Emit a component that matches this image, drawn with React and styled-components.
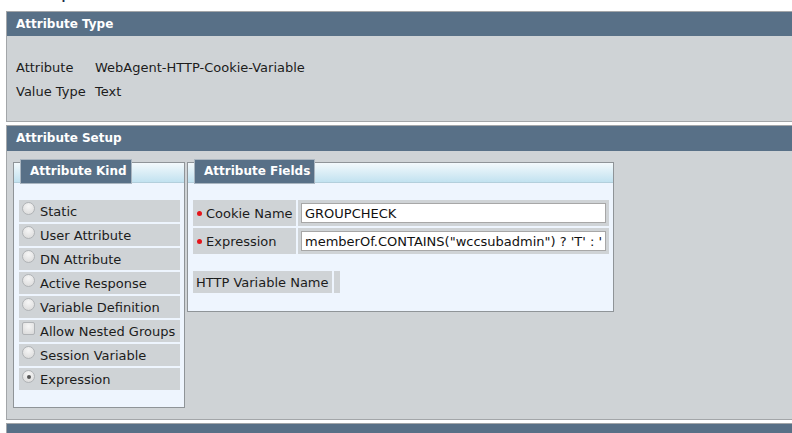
import React from 'react'
import styled, { createGlobalStyle } from 'styled-components'

const GlobalStyle = createGlobalStyle`
	html, body {
		margin     : 0;
		padding    : 0;
		background : #fff;
		overflow   : hidden;
	}
	body {
		font-family: "DejaVu Sans", Verdana, sans-serif;
		font-size  : 13px;
		color      : #1c1c1c;
	}
`

const Page = styled.div`
	width       : 830px;
	padding-left: 6px;
`

// only the descenders of the page title peek in above the first panel
const Title = styled.div`
	height        : 11px;
	overflow      : hidden;
	display       : flex;
	align-items   : flex-end;
	padding-left  : 19px;
	font-size     : 20px;
	line-height   : 1;
	color         : #1a2b4a;
`

const TitleText = styled.span`
	margin-bottom: 10px;
`

const Section = styled.div`
	border       : 1px solid #a3a6a9;
	margin-bottom: 3px;
`

const SectionHeader = styled.div`
	height      : ${p => p.$h || 24}px;
	line-height : ${p => p.$h || 24}px;
	background  : #587087;
	color       : #fff;
	font-weight : bold;
	font-size   : 12px;
	padding-left: 9px;
`

const SectionBody = styled.div`
	background: #cfd3d6;
	height    : ${p => p.$h}px;
	padding   : ${p => p.$pad};
	box-sizing: border-box;
`

const InfoTable = styled.div`
	display              : grid;
	grid-template-columns: 79px auto;
	grid-auto-rows       : 24px;
	align-items          : center;
`

const Setup = styled.div`
	display    : flex;
	align-items: flex-start;
	gap        : 2px;
`

const Fieldset = styled.div`
	width     : ${p => p.$w}px;
	box-sizing: border-box;
	border    : 1px solid #8f9498;
	background: #eef5fe;
`

const FieldHead = styled.div`
	height       : 20px;
	background   : linear-gradient(#f3f9fc, #c2e2f0);
	border-bottom: 1px solid #b3cfdc;
	box-sizing   : border-box;
`

const Legend = styled.div`
	display    : inline-block;
	margin     : -5px 0 0 6px;
	height     : 23px;
	line-height: 23px;
	padding    : 0 4px 0 9px;
	background : #587087;
	border     : 1px solid #a9b5c0;
	color      : #fff;
	font-weight: bold;
	font-size  : 12px;
	position   : relative;
`

const KindList = styled.div`
	display       : flex;
	flex-direction: column;
	gap           : 2px;
	padding       : 17px 4px 17px 5px;
`

const KindRow = styled.label`
	height      : 22px;
	display     : flex;
	align-items : center;
	gap         : 5px;
	padding-left: 3px;
	background  : #cfd3d6;
`

const Radio = styled.span`
	align-self     : flex-start;
	margin-top     : 2px;
	width          : 11px;
	height         : 11px;
	border         : 1px solid #b0b3b6;
	border-radius  : ${p => (p.$box ? '2px' : '50%')};
	background     : radial-gradient(circle at 50% 30%, #f6f6f6, #d8d8d8);
	display        : flex;
	align-items    : center;
	justify-content: center;
	flex-shrink    : 0;

	&::after {
		content      : '';
		display      : ${p => (p.$checked ? 'block' : 'none')};
		width        : 4px;
		height       : 4px;
		border-radius: 50%;
		background   : #555;
	}
`

const Fields = styled.div`
	padding: 17px 4px 18px 5px;
`

const FieldRow = styled.div`
	display              : grid;
	grid-template-columns: 103px 1fr;
	gap                  : 2px;
	height               : 26px;
	margin-bottom        : 2px;
`

const LabelCell = styled.div`
	background  : #cfd3d6;
	display     : flex;
	align-items : center;
	padding-left: 4px;
	white-space : nowrap;

	${p => p.$required && `
		&::before {
			content      : '';
			width        : 5px;
			height       : 5px;
			border-radius: 50%;
			background   : #e4151b;
			margin-right : 4px;
		}
	`}
`

const InputCell = styled.div`
	background: #cfd3d6;
	padding   : 3px;
	display   : flex;
`

const TextInput = styled.input`
	flex       : 1;
	min-width  : 0;
	box-sizing : border-box;
	height     : 20px;
	border     : 1px solid #a7a7a7;
	background : #fff;
	font-family: inherit;
	font-size  : 13px;
	color      : #111;
	padding    : 0 3px;
	outline    : none;
`

const VarRow = styled.div`
	display   : flex;
	gap       : 2px;
	height    : 22px;
	margin-top: 17px;
`

const VarCell = styled.div`
	background  : #cfd3d6;
	width       : ${p => p.$w}px;
	padding-left: ${p => p.$pl || 0}px;
	box-sizing  : border-box;
	display     : flex;
	align-items : center;
	white-space : nowrap;
`

const kinds = [
	{ label: 'Static' },
	{ label: 'User Attribute' },
	{ label: 'DN Attribute' },
	{ label: 'Active Response' },
	{ label: 'Variable Definition' },
	{ label: 'Allow Nested Groups', box: true },
	{ label: 'Session Variable' },
	{ label: 'Expression', checked: true },
]

export default function App() {
	return (
		<>
			<GlobalStyle />
			<Page>
				<Title><TitleText>Response Attribute</TitleText></Title>

				<Section>
					<SectionHeader>Attribute Type</SectionHeader>
					<SectionBody $h={85} $pad="19px 0 0 9px">
						<InfoTable>
							<span>Attribute</span>
							<span>WebAgent-HTTP-Cookie-Variable</span>
							<span>Value Type</span>
							<span>Text</span>
						</InfoTable>
					</SectionBody>
				</Section>

				<Section>
					<SectionHeader $h={25}>Attribute Setup</SectionHeader>
					<SectionBody $h={268} $pad="11px 0 0 6px">
						<Setup>
							<Fieldset $w={172}>
								<FieldHead><Legend>Attribute Kind</Legend></FieldHead>
								<KindList>
									{kinds.map(k => (
										<KindRow key={k.label}>
											<Radio $box={k.box} $checked={k.checked} />
											{k.label}
										</KindRow>
									))}
								</KindList>
							</Fieldset>

							<Fieldset $w={427}>
								<FieldHead><Legend>Attribute Fields</Legend></FieldHead>
								<Fields>
									<FieldRow>
										<LabelCell $required>Cookie Name</LabelCell>
										<InputCell><TextInput defaultValue="GROUPCHECK" /></InputCell>
									</FieldRow>
									<FieldRow>
										<LabelCell $required>Expression</LabelCell>
										<InputCell>
											<TextInput defaultValue={`memberOf.CONTAINS("wccsubadmin") ? 'T' : 'F'`} />
										</InputCell>
									</FieldRow>
									<VarRow>
										<VarCell $w={139} $pl={3}>HTTP Variable Name</VarCell>
										<VarCell $w={6} />
									</VarRow>
								</Fields>
							</Fieldset>
						</Setup>
					</SectionBody>
				</Section>

				<Section>
					<SectionHeader />
				</Section>
			</Page>
		</>
	)
}
